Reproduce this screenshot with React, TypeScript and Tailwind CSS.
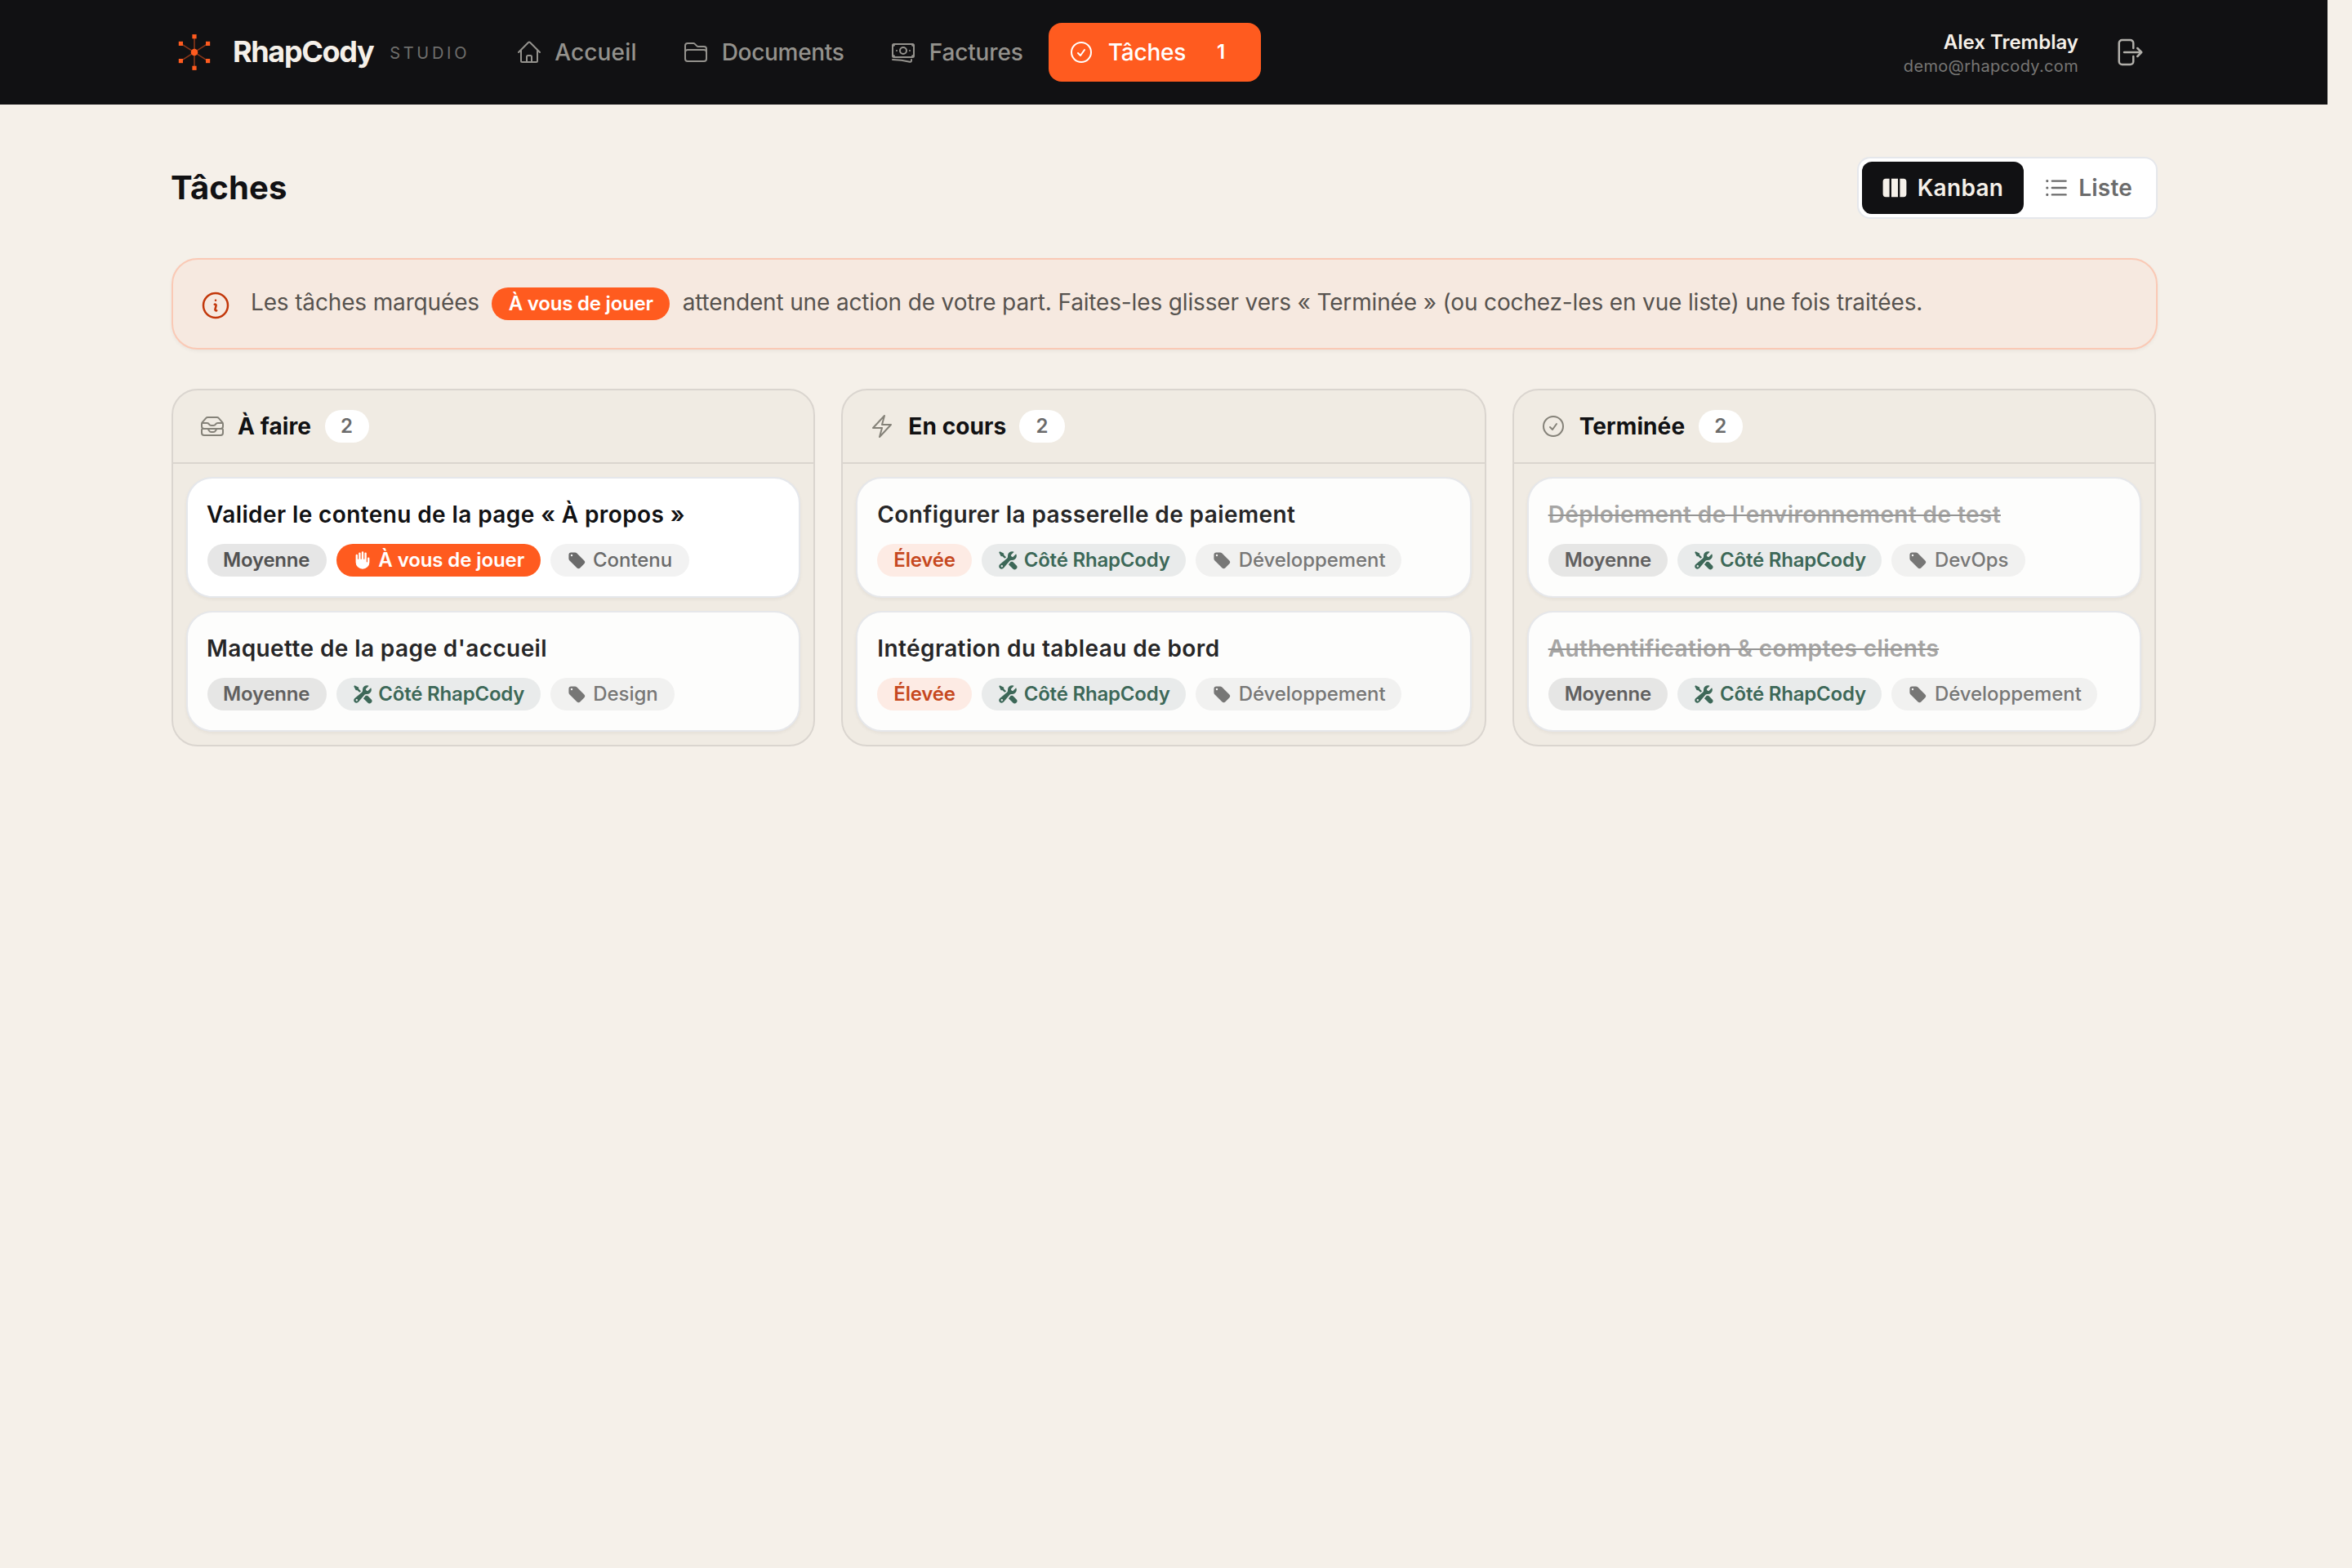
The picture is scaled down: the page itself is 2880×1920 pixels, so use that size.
import type { ReactNode } from "react";
import {
  HiOutlineArrowRightStartOnRectangle,
  HiOutlineBanknotes,
  HiOutlineBolt,
  HiOutlineCheckCircle,
  HiOutlineFolder,
  HiOutlineHome,
  HiOutlineInboxStack,
  HiOutlineInformationCircle,
  HiMiniHandRaised,
  HiMiniListBullet,
  HiMiniTag,
  HiMiniViewColumns,
  HiMiniWrenchScrewdriver,
} from "react-icons/hi2";

type Task = {
  title: string;
  priority: "Moyenne" | "Élevée";
  mine?: boolean;
  category: string;
  done?: boolean;
};

const columns: { name: string; icon: ReactNode; tasks: Task[] }[] = [
  {
    name: "À faire",
    icon: <HiOutlineInboxStack className="size-4" />,
    tasks: [
      { title: "Valider le contenu de la page « À propos »", priority: "Moyenne", mine: true, category: "Contenu" },
      { title: "Maquette de la page d'accueil", priority: "Moyenne", category: "Design" },
    ],
  },
  {
    name: "En cours",
    icon: <HiOutlineBolt className="size-4" />,
    tasks: [
      { title: "Configurer la passerelle de paiement", priority: "Élevée", category: "Développement" },
      { title: "Intégration du tableau de bord", priority: "Élevée", category: "Développement" },
    ],
  },
  {
    name: "Terminée",
    icon: <HiOutlineCheckCircle className="size-4" />,
    tasks: [
      { title: "Déploiement de l'environnement de test", priority: "Moyenne", category: "DevOps", done: true },
      { title: "Authentification & comptes clients", priority: "Moyenne", category: "Développement", done: true },
    ],
  },
];

const navLinks = [
  { label: "Accueil", icon: <HiOutlineHome className="size-4" />, tracking: "tracking-[0.08px]" },
  { label: "Documents", icon: <HiOutlineFolder className="size-4" />, tracking: "tracking-[-0.15px]" },
  { label: "Factures", icon: <HiOutlineBanknotes className="size-4" />, tracking: "tracking-[-0.06px]" },
];

function Logo() {
  return (
    <svg viewBox="0 0 28 28" className="size-7" fill="#ff5b1f" stroke="#ff5b1f">
      <path strokeWidth="0.8" opacity="0.5" d="M14 4.4V23.6M5.7 8.7L22.3 19.3M22.3 8.7L5.7 19.3" />
      <g stroke="none">
        <circle cx="14" cy="14" r="2.15" />
        <rect x="12.7" y="3.05" width="2.6" height="2.6" />
        <rect x="12.7" y="22.35" width="2.6" height="2.6" />
        <rect x="4.4" y="7.4" width="2.6" height="2.6" />
        <rect x="21" y="7.4" width="2.6" height="2.6" />
        <rect x="4.4" y="18" width="2.6" height="2.6" />
        <rect x="21" y="18" width="2.6" height="2.6" />
      </g>
    </svg>
  );
}

function Header() {
  return (
    <header className="h-16 bg-[#111113]">
      <div className="mx-auto flex h-full max-w-7xl items-center px-8">
        <div className="flex items-center gap-2.5">
          <Logo />
          <span className="text-lg font-bold tracking-[-0.68px] text-[#f5f0e9]">RhapCody</span>
          <span className="pt-px text-[10px] tracking-[1.85px] text-[#6f6e6c]">STUDIO</span>
        </div>
        <nav className="ml-4 flex items-center gap-1">
          {navLinks.map((link) => (
            <a
              key={link.label}
              className={`flex h-9 items-center gap-2 rounded-lg px-3 text-sm font-medium text-[#94928d] ${link.tracking}`}
            >
              {link.icon}
              {link.label}
            </a>
          ))}
          <a className="flex h-9 items-center gap-2 rounded-lg bg-[#ff5b1f] px-3 text-sm font-medium tracking-[-0.12px] text-white">
            <HiOutlineCheckCircle className="size-4" />
            Tâches
            <span className="ml-[1.5px] flex h-5 min-w-6 items-center justify-center rounded-full px-2 text-xs font-semibold">
              1
            </span>
          </a>
        </nav>
        <div className="ml-auto flex items-center gap-3">
          <div className="pt-px text-right">
            <p className="text-xs font-semibold leading-[15px] text-[#f5f0e9]">Alex Tremblay</p>
            <p className="text-[10px] leading-[14px] tracking-[0.16px] text-[#777674]">demo@rhapcody.com</p>
          </div>
          <button className="rounded-lg p-2 text-[#b0aea9]">
            <HiOutlineArrowRightStartOnRectangle className="size-5" />
          </button>
        </div>
      </div>
    </header>
  );
}

function Chip({ className, children }: { className: string; children: ReactNode }) {
  return (
    <span className={`inline-flex h-5 items-center gap-1 rounded-full px-2.5 text-xs ${className}`}>
      {children}
    </span>
  );
}

function TaskCard({ task }: { task: Task }) {
  return (
    <div className={`rounded-2xl border border-gray-200 bg-white p-3 shadow-xs ${task.mine ? "" : "opacity-90"}`}>
      <p
        className={`text-sm font-semibold tracking-[0.2px] ${task.done ? "text-[#9e9e9e] line-through decoration-[#8c8c8c]" : "text-[#111113]"}`}
      >
        {task.title}
      </p>
      <div className="mt-2 flex gap-1.5">
        {task.priority === "Moyenne" ? (
          <Chip className="bg-[#e6e6e6] font-semibold tracking-[-0.1px] text-[#525252]">Moyenne</Chip>
        ) : (
          <Chip className="bg-[#ffece5] font-semibold tracking-[-0.1px] text-[#c2370a]">Élevée</Chip>
        )}
        {task.mine ? (
          <Chip className="bg-[#ff5b1f] font-semibold tracking-[-0.05px] text-white">
            <HiMiniHandRaised className="size-3" />À vous de jouer
          </Chip>
        ) : (
          <Chip className="bg-[#e9ecec] font-semibold tracking-[-0.1px] text-[#2a5a4a]">
            <HiMiniWrenchScrewdriver className="size-3" />
            Côté RhapCody
          </Chip>
        )}
        <Chip className="bg-[#f2f2f2] font-medium tracking-[-0.03px] text-[#6b6b6b]">
          <HiMiniTag className="size-3" />
          {task.category}
        </Chip>
      </div>
    </div>
  );
}

export default function App() {
  return (
    <div className="h-[1920px] w-[2880px] overflow-hidden">
      <div className="h-[960px] w-[1440px] origin-top-left scale-200 bg-[#f5f0e9] pr-[15px] font-['Inter',sans-serif]">
        <Header />
        <main className="mx-auto max-w-7xl px-8 pt-8">
          <div className="flex items-center justify-between">
            <h1 className="text-xl font-bold tracking-[0.08px] text-[#111113]">Tâches</h1>
            <div className="flex rounded-lg border border-gray-200 bg-white p-0.5 text-sm font-semibold">
              <span className="flex h-8 items-center gap-1.5 rounded-md bg-[#111113] px-3 tracking-[0.15px] text-[#f5f0e9]">
                <HiMiniViewColumns className="size-4" />
                Kanban
              </span>
              <span className="flex h-8 items-center gap-1.5 px-3 tracking-[0.1px] text-[#6b6b6b]">
                <HiMiniListBullet className="size-4" />
                Liste
              </span>
            </div>
          </div>

          <div className="mt-6 flex h-14 items-start gap-3 rounded-2xl border border-[#fac9b5] bg-[#f6e9e0] px-4 pt-4 shadow-xs">
            <HiOutlineInformationCircle className="mt-0.5 size-5 text-[#c2370a]" />
            <p className="text-sm tracking-[-0.075px] text-[#57534f]">
              Les tâches marquées{" "}
              <span className="mx-1 inline-flex h-5 items-center rounded-full bg-[#ff5b1f] px-2.5 text-xs font-semibold tracking-[-0.1px] text-white">
                À vous de jouer
              </span>{" "}
              attendent une action de votre part. Faites-les glisser vers « Terminée » (ou cochez-les en vue liste) une
              fois traitées.
            </p>
          </div>

          <div className="mt-6 grid grid-cols-3 gap-4">
            {columns.map((column) => (
              <section key={column.name} className="rounded-2xl border border-[#dad5cf] bg-[#f0ebe3]">
                <div className="flex items-center gap-2 border-b border-[#dad5cf] px-4 py-3 text-[#858279]">
                  {column.icon}
                  <h2 className="text-sm font-bold tracking-[0.05px] text-[#111113]">{column.name}</h2>
                  <span className="flex h-5 items-center rounded-full bg-white px-2.5 text-xs font-semibold text-[#6b6b6b]">
                    {column.tasks.length}
                  </span>
                </div>
                <div className="flex flex-col gap-2 p-2">
                  {column.tasks.map((task) => (
                    <TaskCard key={task.title} task={task} />
                  ))}
                </div>
              </section>
            ))}
          </div>
        </main>
      </div>
    </div>
  );
}
